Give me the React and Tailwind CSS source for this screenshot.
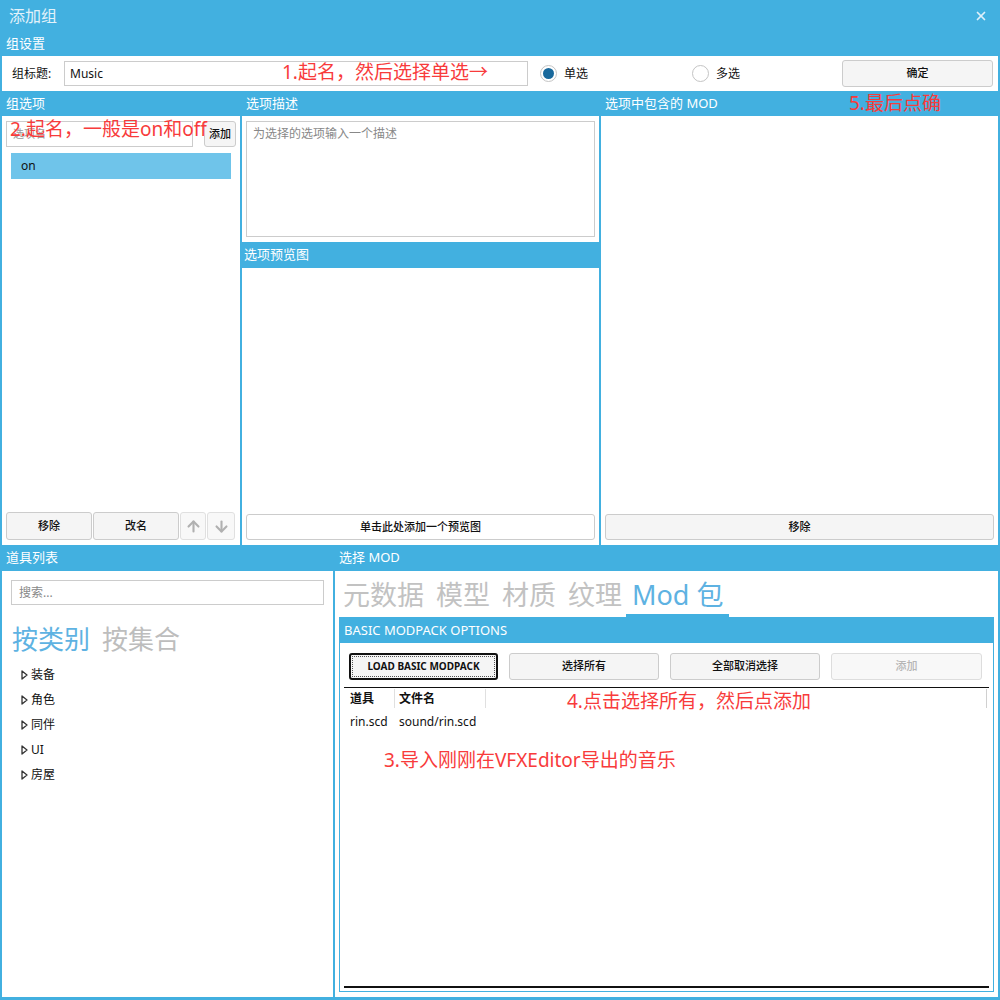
// Add-group dialog — settings row, options columns, item list and mod selection
import { ArrowUp, ArrowDown, X } from 'lucide-react';

const font = "font-['Noto_Sans','Noto_Sans_CJK_SC',sans-serif]";

const Btn = ({ children, className = '', disabled }) => (
  <div
    className={`flex items-center justify-center rounded-[3px] border border-[#cccccc] bg-[#f5f5f5] text-[11px] font-medium ${disabled ? 'text-[#b5b5b5] bg-[#f8f8f8] border-[#dddddd]' : 'text-[#111]'} ${className}`}
  >
    {children}
  </div>
);

const Radio = ({ checked, label }) => (
  <div className="flex items-center gap-[7px]">
    <div className="w-[17px] h-[17px] rounded-full border border-[#c4c4c4] bg-white flex items-center justify-center">
      {checked && <div className="w-[11px] h-[11px] rounded-full bg-[#19699c]" />}
    </div>
    <span className="text-[12px] text-[#111]">{label}</span>
  </div>
);

const Tri = () => (
  <svg width="7" height="10" viewBox="0 0 7 10">
    <path d="M1 1 L6 5 L1 9 Z" fill="white" stroke="#333" strokeWidth="1.3" strokeLinejoin="round" />
  </svg>
);

const tree = ['装备', '角色', '同伴', 'UI', '房屋'];
const tabs = ['元数据', '模型', '材质', '纹理'];

const Note = ({ className, children }) => (
  <div className={`absolute text-[19px] leading-none text-[#f83b3b] whitespace-nowrap ${className}`}>{children}</div>
);

export default function App() {
  return (
    <div className={`relative w-[1000px] h-[1000px] bg-[#42b0e0] flex flex-col overflow-hidden ${font}`}>
      {/* title bar */}
      <div className="h-[32px] flex items-center justify-between pl-[9px] pr-[12px]">
        <span className="text-[16px] text-[#e3f2fa]">添加组</span>
        <X size={14} strokeWidth={3} className="text-[#dff0fa]" />
      </div>

      <div className="h-[24px] flex items-center pl-[6px] text-[13px] text-white">组设置</div>

      {/* group settings */}
      <div className="mx-[2px] h-[35px] bg-white flex items-center">
        <span className="ml-[10px] w-[52px] text-[12px] text-[#111]">组标题:</span>
        <div className="w-[464px] h-[25px] border border-[#cccccc] flex items-center pl-[5px] text-[12px] text-[#111]">Music</div>
        <div className="ml-[12px] w-[152px]"><Radio checked label="单选" /></div>
        <div className="w-[150px]"><Radio label="多选" /></div>
        <Btn className="w-[151px] h-[27px]">确定</Btn>
      </div>

      {/* column headers */}
      <div className="h-[25px] flex items-center text-[13px] text-white">
        <span className="w-[244px] pl-[6px]">组选项</span>
        <span className="w-[359px] pl-[2px]">选项描述</span>
        <span className="pl-[2px]">选项中包含的 MOD</span>
      </div>

      {/* upper body */}
      <div className="h-[429px] mx-[2px] flex gap-[2px]">
        <div className="w-[238px] bg-white flex flex-col px-[4px] pt-[5px] pb-[5px]">
          <div className="flex items-center justify-between">
            <div className="w-[187px] h-[26px] border border-[#cccccc] flex items-center pl-[6px] text-[11px] text-[#999]">选项名</div>
            <Btn className="w-[32px] h-[26px] text-[10px]">添加</Btn>
          </div>
          <div className="mt-[6px] ml-[5px] w-[220px] h-[26px] bg-[#6fc4ea] flex items-center pl-[10px] text-[12px] text-[#111]">on</div>
          <div className="flex-1" />
          <div className="flex gap-[1px]">
            <Btn className="w-[86px] h-[28px]">移除</Btn>
            <Btn className="w-[86px] h-[28px]">改名</Btn>
            <Btn className="w-[26px] h-[28px] bg-[#f8f8f8] border-[#e0e0e0]"><ArrowUp size={17} strokeWidth={3} className="text-[#b0b0b0]" /></Btn>
            <Btn className="w-[28px] h-[28px] bg-[#f8f8f8] border-[#e0e0e0]"><ArrowDown size={17} strokeWidth={3} className="text-[#b0b0b0]" /></Btn>
          </div>
        </div>

        <div className="w-[357px] flex flex-col">
          <div className="bg-white px-[4px] pt-[5px] pb-[5px]">
            <div className="h-[116px] border border-[#cccccc] px-[6px] pt-[3px] text-[12px] text-[#888]">为选择的选项输入一个描述</div>
          </div>
          <div className="h-[26px] flex items-center pl-[2px] text-[13px] text-white">选项预览图</div>
          <div className="flex-1 bg-white flex flex-col justify-end px-[4px] pb-[5px]">
            <Btn className="h-[26px] bg-white">单击此处添加一个预览图</Btn>
          </div>
        </div>

        <div className="flex-1 bg-white flex flex-col justify-end px-[4px] pb-[5px]">
          <Btn className="h-[26px]">移除</Btn>
        </div>
      </div>

      {/* lower headers */}
      <div className="h-[26px] flex items-center text-[13px] text-white">
        <span className="w-[337px] pl-[6px]">道具列表</span>
        <span className="pl-[2px]">选择 MOD</span>
      </div>

      {/* lower body */}
      <div className="h-[426px] mx-[2px] flex gap-[2px]">
        <div className="w-[331px] bg-white flex flex-col pt-[9px]">
          <div className="ml-[9px] w-[313px] h-[25px] border border-[#cccccc] flex items-center pl-[7px] text-[12px] text-[#888]">搜索...</div>
          <div className="mt-[17px] ml-[10px] flex gap-[12px] text-[26px] leading-[34px]">
            <span className="text-[#5eb2e2]">按类别</span>
            <span className="text-[#bdbdbd]">按集合</span>
          </div>
          <div className="mt-[6px] flex flex-col">
            {tree.map((t) => (
              <div key={t} className="h-[25px] flex items-center gap-[3px] pl-[19px] text-[12px] text-[#111]">
                <Tri />
                <span>{t}</span>
              </div>
            ))}
          </div>
        </div>

        <div className="flex-1 bg-white flex flex-col px-[4px] pb-[5px]">
          <div className="h-[46px] flex items-end ml-[-2px]">
            {tabs.map((t) => (
              <div key={t} className="px-[6px] pb-[4px] text-[27px] leading-[36px] text-[#c2c2c2]">{t}</div>
            ))}
            <div className="ml-[-2px] px-[6px] pb-[1px] border-b-[3px] border-[#42b0e0] text-[27px] leading-[36px] text-[#5eb2e2]">Mod 包</div>
          </div>

          <div className="flex-1 border border-[#42b0e0] flex flex-col">
            <div className="h-[25px] bg-[#42b0e0] flex items-center pl-[4px] text-[13px] text-white">BASIC MODPACK OPTIONS</div>
            <div className="mt-[10px] ml-[9px] flex gap-[11px]">
              <div className="w-[149px] h-[27px] rounded-[3px] border-2 border-[#111] bg-[#f5f5f5] flex items-center justify-center">
                <div className="w-[143px] h-[21px] border border-dotted border-[#555] flex items-center justify-center text-[10px] font-bold text-[#111]">LOAD BASIC MODPACK</div>
              </div>
              <Btn className="w-[150px] h-[27px]">选择所有</Btn>
              <Btn className="w-[150px] h-[27px]">全部取消选择</Btn>
              <Btn disabled className="w-[151px] h-[27px]">添加</Btn>
            </div>

            <div className="mt-[7px] mx-[4px] flex-1 border-t border-[#111] flex flex-col">
              <div className="h-[21px] flex items-center text-[12px] font-bold text-[#111]">
                <span className="w-[50px] pl-[6px]">道具</span>
                <div className="w-px h-[19px] bg-[#e0e0e0]" />
                <span className="w-[90px] pl-[4px]">文件名</span>
                <div className="w-px h-[19px] bg-[#e0e0e0]" />
                <div className="flex-1" />
                <div className="w-px h-[19px] bg-[#d0d0d0] mr-[2px]" />
              </div>
              <div className="h-[26px] flex items-center text-[12px] text-[#111]">
                <span className="w-[50px] pl-[6px]">rin.scd</span>
                <span className="pl-[5px]">sound/rin.scd</span>
              </div>
              <div className="flex-1" />
              <div className="h-[2px] bg-[#111] mb-[3px]" />
            </div>
          </div>
        </div>
      </div>

      {/* red annotations laid over the screenshot */}
      <Note className="left-[282px] top-[63px]">1.起名，然后选择单选→</Note>
      <Note className="left-[10px] top-[120px]">2.起名，一般是on和off</Note>
      <Note className="left-[849px] top-[94px]">5.最后点确</Note>
      <Note className="left-[567px] top-[692px]">4.点击选择所有，然后点添加</Note>
      <Note className="left-[384px] top-[751px]">3.导入刚刚在VFXEditor导出的音乐</Note>
    </div>
  );
}
